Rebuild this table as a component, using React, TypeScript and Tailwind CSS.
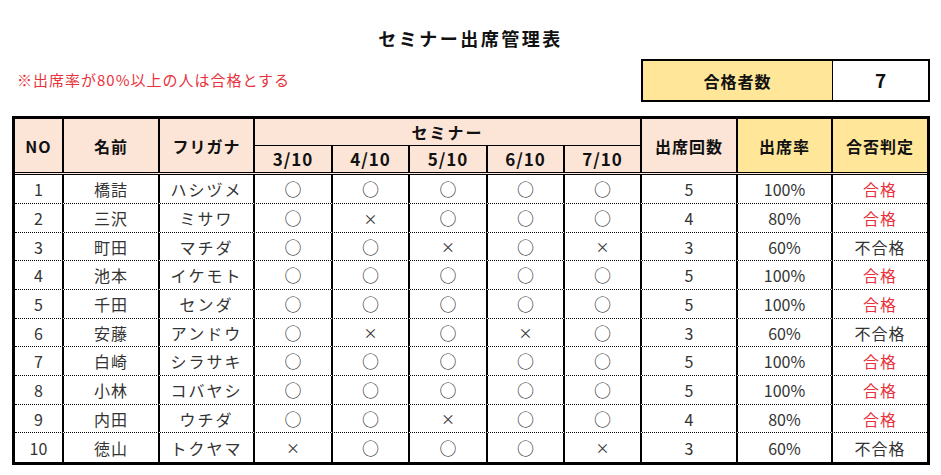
import React from 'react';

type Mark = '○' | '×';

interface Row {
  no: number;
  name: string;
  kana: string;
  marks: Mark[];
}

const rows: Row[] = [
  { no: 1, name: '橋詰', kana: 'ハシヅメ', marks: ['○', '○', '○', '○', '○'] },
  { no: 2, name: '三沢', kana: 'ミサワ', marks: ['○', '×', '○', '○', '○'] },
  { no: 3, name: '町田', kana: 'マチダ', marks: ['○', '○', '×', '○', '×'] },
  { no: 4, name: '池本', kana: 'イケモト', marks: ['○', '○', '○', '○', '○'] },
  { no: 5, name: '千田', kana: 'センダ', marks: ['○', '○', '○', '○', '○'] },
  { no: 6, name: '安藤', kana: 'アンドウ', marks: ['○', '×', '○', '×', '○'] },
  { no: 7, name: '白崎', kana: 'シラサキ', marks: ['○', '○', '○', '○', '○'] },
  { no: 8, name: '小林', kana: 'コバヤシ', marks: ['○', '○', '○', '○', '○'] },
  { no: 9, name: '内田', kana: 'ウチダ', marks: ['○', '○', '×', '○', '○'] },
  { no: 10, name: '徳山', kana: 'トクヤマ', marks: ['×', '○', '○', '○', '×'] },
];

const dates = ['3/10', '4/10', '5/10', '6/10', '7/10'];

// row heights so the ten rows fill 175..461 like the sheet
const rowHeights = [
  'h-[29px]', 'h-[29px]', 'h-[28px]', 'h-[29px]', 'h-[29px]',
  'h-[28px]', 'h-[29px]', 'h-[29px]', 'h-[28px]', 'h-[29px]',
];

const cols = 'grid grid-cols-[49px_96px_95px_78px_77px_78px_77px_77px_96px_95px_94px]';
const font = "font-['Noto_Sans_CJK_JP','Noto_Sans',sans-serif]";

function HeadCell({ children, className = '' }: { children: React.ReactNode; className?: string }) {
  return (
    <div className={`flex items-center justify-center border-black font-bold text-[16px] tracking-[1px] text-[#111] ${className}`}>
      {children}
    </div>
  );
}

export default function App() {
  const passed = rows.filter((r) => r.marks.filter((m) => m === '○').length / 5 >= 0.8).length;

  return (
    <div className={`w-[941px] h-[475px] bg-white overflow-hidden ${font}`}>
      <h1 className="pt-[25px] text-center text-[18px] leading-[26px] font-bold tracking-[2.5px] text-[#111]">
        セミナー出席管理表
      </h1>

      <div className="mt-[8px] flex items-center h-[43px]">
        <p className="pl-[17px] text-[15px] tracking-[1px] text-[#e8323c]">※出席率が80%以上の人は合格とする</p>
        <div className="ml-auto mr-[11px] flex w-[289px] h-[43px] border-2 border-black">
          <div className="w-[190px] flex items-center justify-center bg-[#ffe699] border-r border-black font-bold text-[16px] tracking-[1px] text-[#111]">
            合格者数
          </div>
          <div className="flex-1 flex items-center justify-center font-bold text-[19px] text-[#111]">{passed}</div>
        </div>
      </div>

      <div className="mt-[14px] ml-[12px] w-[918px] border-[3px] border-black">
        {/* header */}
        <div className={`${cols} grid-rows-[27px_26px] border-b-[3px] border-double border-black bg-[#fce4d6]`}>
          <HeadCell className="row-span-2 border-r-2">NO</HeadCell>
          <HeadCell className="row-span-2 border-r-2">名前</HeadCell>
          <HeadCell className="row-span-2 border-r-2">フリガナ</HeadCell>
          <HeadCell className="col-span-5 border-r-2 border-b tracking-[2px]">セミナー</HeadCell>
          <HeadCell className="row-span-2 border-r-2">出席回数</HeadCell>
          <HeadCell className="row-span-2 border-r-2 bg-[#ffe699]">出席率</HeadCell>
          <HeadCell className="row-span-2 bg-[#ffe699]">合否判定</HeadCell>
          {dates.map((d) => (
            <HeadCell key={d} className="border-r-2 text-[17px]">
              {d}
            </HeadCell>
          ))}
        </div>

        {/* body */}
        {rows.map((r, i) => {
          const count = r.marks.filter((m) => m === '○').length;
          const rate = (count / 5) * 100;
          const ok = rate >= 80;
          const last = i === rows.length - 1;
          const cell = 'flex items-center justify-center border-r-2 border-black';
          return (
            <div
              key={r.no}
              className={`${cols} ${rowHeights[i]} text-[16px] text-[#333] ${last ? '' : 'border-b border-dotted border-black'}`}
            >
              <div className={cell}>{r.no}</div>
              <div className={`${cell} tracking-[1px]`}>{r.name}</div>
              <div className={`${cell} tracking-[2px]`}>{r.kana}</div>
              {r.marks.map((m, j) => (
                <div key={j} className={`${cell} ${m === '×' ? 'text-[14px]' : 'text-[17px]'}`}>
                  {m}
                </div>
              ))}
              <div className={cell}>{count}</div>
              <div className={cell}>{rate}%</div>
              <div className={`flex items-center justify-center tracking-[1px] ${ok ? 'text-[#e8323c]' : ''}`}>
                {ok ? '合格' : '不合格'}
              </div>
            </div>
          );
        })}
      </div>
    </div>
  );
}
